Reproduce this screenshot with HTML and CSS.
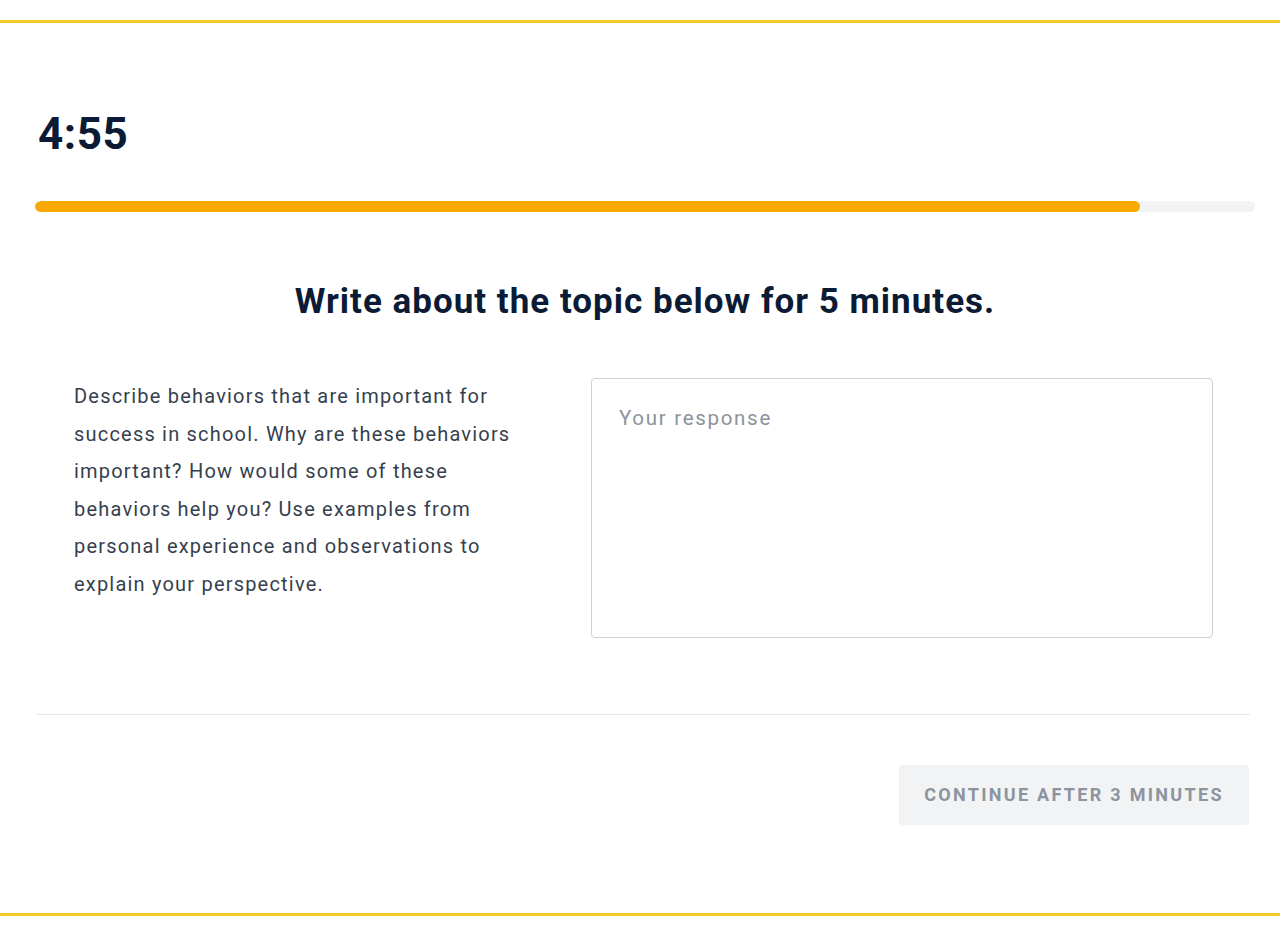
FILE: index.html
```html
<!DOCTYPE html>
<html>
<head>
<meta charset="utf-8">
<link rel="stylesheet" href="styles.css">
</head>
<body>
<div class="frame">
  <div class="content">
    <div class="timer">4:55</div>
    <div class="progress"><div class="progress-fill" style="width:90.6%"></div></div>
    <h1 class="heading">Write about the topic below for 5 minutes.</h1>
    <div class="task">
      <p class="prompt">Describe behaviors that are important for success in school. Why are these behaviors important? How would some of these behaviors help you? Use examples from personal experience and observations to explain your perspective.</p>
      <textarea class="response" placeholder="Your response"></textarea>
    </div>
    <hr class="divider">
    <div class="actions">
      <button class="continue" disabled>CONTINUE AFTER 3 MINUTES</button>
    </div>
  </div>
</div>
</body>
</html>
```
FILE: styles.css
```css
html, body {
  margin: 0;
  padding: 0;
  background: #fff;
}
body {
  font-family: Roboto, "Liberation Sans", sans-serif;
  color: #0b1b35;
}
.frame {
  margin-top: 20px;
  height: 896px;
  border-top: 3px solid #f6c926;
  border-bottom: 3px solid #f6c926;
  box-sizing: border-box;
}
.content {
  padding: 0 25px 0 35px;
}
.timer {
  margin-top: 85px;
  margin-left: 3px;
  font-size: 44px;
  font-weight: 700;
  line-height: 52px;
  letter-spacing: 0.5px;
  color: #0b1b35;
}
.progress {
  margin-top: 41px;
  height: 11px;
  border-radius: 6px;
  background: #f1f3f5;
  overflow: hidden;
}
.progress-fill {
  height: 100%;
  background: #f8a904;
  border-radius: 6px;
}
.heading {
  margin: 68px 0 0;
  text-align: center;
  font-size: 35px;
  font-weight: 700;
  line-height: 44px;
  letter-spacing: 1px;
  color: #0b1b35;
}
.task {
  display: flex;
  gap: 77px;
  margin: 54px 42px 0 39px;
  align-items: flex-start;
}
.prompt {
  margin: 0;
  width: 440px;
  flex: none;
  font-size: 20px;
  line-height: 37.5px;
  letter-spacing: 1.2px;
  color: #363f4e;
}
.response {
  flex: 1;
  height: 260px;
  box-sizing: border-box;
  border: 1px solid #cfd3d8;
  border-radius: 4px;
  padding: 27px 27px;
  font-family: Roboto, "Liberation Sans", sans-serif;
  font-size: 20.5px;
  letter-spacing: 1.7px;
  resize: none;
  outline: none;
}
.response::placeholder {
  color: #8c939c;
}
.divider {
  margin: 76px 5px 0 2px;
  border: 0;
  border-top: 1px solid #e3e5e8;
}
.actions {
  display: flex;
  justify-content: flex-end;
  margin-top: 50px;
  padding-right: 6px;
}
.continue {
  width: 350px;
  height: 60px;
  border: 0;
  border-radius: 4px;
  background: #f1f3f5;
  color: #8c949e;
  font-family: Roboto, "Liberation Sans", sans-serif;
  font-size: 18px;
  font-weight: 700;
  letter-spacing: 2.3px;
  padding-top: 0;
  padding-bottom: 2px;
}
```
